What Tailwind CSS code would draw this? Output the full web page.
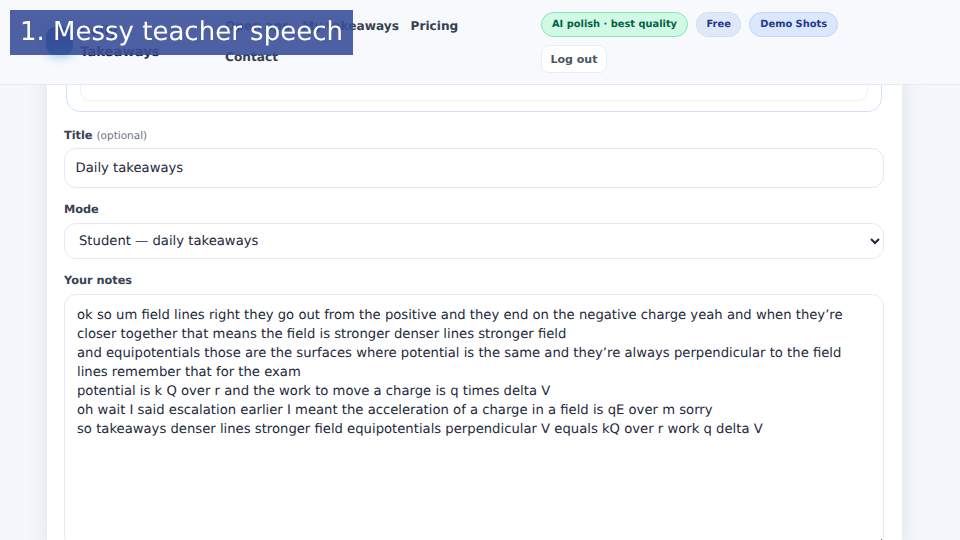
<!DOCTYPE html>
<html lang="en">
<head>
<meta charset="UTF-8">
<title>Takeaways</title>
<script src="https://cdn.jsdelivr.net/npm/@tailwindcss/browser@4"></script>
</head>
<body class="h-screen overflow-hidden bg-[#f4f7fb] font-['DejaVu_Sans',sans-serif] text-[#1e293b] [text-rendering:geometricPrecision]">
  <!-- caption over the recording -->
  <div class="fixed left-[10px] top-[10px] z-50 bg-[#394f99]/90 px-[10px] py-[3px] text-[26px] leading-[39px] text-white">1. Messy teacher speech</div>

  <header class="relative z-10 flex h-[85px] border-b border-[#e6ebf3] bg-[#f7f9fc]">
    <div class="flex w-[225px] shrink-0 items-start gap-[7px] pl-[46px] pt-[21px]">
      <div class="mt-[6px] h-[28px] w-[27px] rounded-[9px] bg-gradient-to-b from-[#1e40af] via-[#1e40af] to-[#14b8a6] shadow-[0_3px_8px_rgba(59,130,246,0.35)]"></div>
      <div class="text-[13.2px] font-bold leading-[21px] text-[#1e293b]">Daily<br>Takeaways</div>
    </div>
    <nav class="flex w-[250px] shrink-0 flex-wrap content-start gap-x-[11.5px] gap-y-[13px] pt-[17px] text-[12.16px] font-bold leading-[18px] text-[#374151]">
      <a>Open app</a>
      <a>My takeaways</a>
      <a>Pricing</a>
      <a>Contact</a>
    </nav>
    <div class="ml-[66px] flex w-[300px] flex-wrap content-start gap-x-[8px] gap-y-[8px] pt-[12px] text-[9.85px] font-bold">
      <span class="rounded-full border border-[#86e5bd] bg-[#d1fae5] px-[10px] pt-[4.5px] pb-[5.5px] leading-[13px] text-[#065f46]">AI polish · best quality</span>
      <span class="rounded-full border border-dotted border-[#a7e8cf] bg-[#e0e7f8] px-[9.5px] pt-[4.5px] pb-[5.5px] leading-[13px] text-[#1e3a8a]">Free</span>
      <span class="rounded-full border border-[#bfd7fb] bg-[#dbe7fb] px-[10px] pt-[4.5px] pb-[5.5px] leading-[13px] text-[#1e3a8a]">Demo Shots</span>
      <button class="rounded-[8px] border border-[#e8ecf4] bg-white px-[8.5px] pt-[6.5px] pb-[5.5px] text-[11px] font-bold leading-[14px] text-[#4b5563]">Log out</button>
    </div>
  </header>

  <main class="ml-[47px] w-[855px] bg-white px-[17px] shadow-[0_4px_24px_rgba(15,23,42,0.09)]">
    <div class="-mt-[20px] ml-[2px] h-[47px] w-[816px] rounded-[14px] border border-[#d3e2f8] px-[13px]">
      <div class="h-[35px] rounded-[10px] border border-[#edf0f6]"></div>
    </div>

    <label class="mt-[16px] block text-[11.3px] font-bold leading-[16px] text-[#374151]">Title <span class="text-[10.5px] font-normal text-[#6b7280]">(optional)</span></label>
    <input class="mt-[4px] block h-[40px] w-[820px] rounded-[12px] border border-[#e6e9f5] bg-white pl-[10.5px] pr-[11px] text-[13.2px] text-[#1e293b] [text-rendering:geometricPrecision]" value="Daily takeaways">

    <label class="mt-[14px] block text-[11.3px] font-bold leading-[16px] text-[#374151]">Mode</label>
    <select class="mt-[5px] block h-[36px] w-[820px] rounded-[12px] border border-[#e6e9f5] bg-white px-[10px] text-[13.2px] text-[#1e293b] [text-rendering:geometricPrecision]">
      <option>Student — daily takeaways</option>
    </select>

    <label class="mt-[14px] block text-[11.3px] font-bold leading-[16px] text-[#374151]">Your notes</label>
    <textarea class="mt-[5px] block h-[254px] w-[820px] rounded-[12px] border border-[#e6e9f5] bg-white px-[12px] pt-[11px] pb-[10px] text-[13.2px] leading-[19px] text-[#1e293b] [text-rendering:geometricPrecision]">ok so um field lines right they go out from the positive and they end on the negative charge yeah and when they’re closer together that means the field is stronger denser lines stronger field
and equipotentials those are the surfaces where potential is the same and they’re always perpendicular to the field lines remember that for the exam
potential is k Q over r and the work to move a charge is q times delta V
oh wait I said escalation earlier I meant the acceleration of a charge in a field is qE over m sorry
so takeaways denser lines stronger field equipotentials perpendicular V equals kQ over r work q delta V</textarea>
  </main>
</body>
</html>
